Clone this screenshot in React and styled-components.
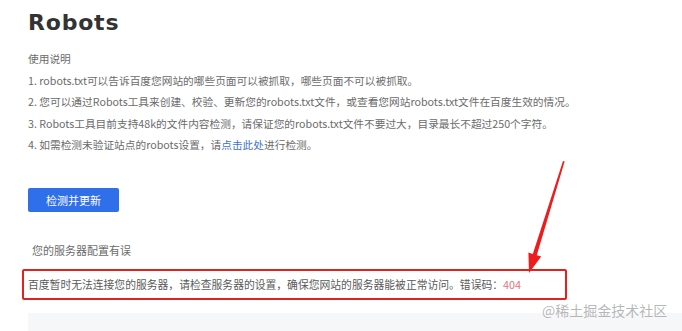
import React from "react";
import styled, { createGlobalStyle } from "styled-components";

const Global = createGlobalStyle`
  html, body { margin: 0; padding: 0; background: #fff; }
  body { font-family: "Noto Sans CJK SC", "Noto Sans", sans-serif; }
  #root { width: 682px; height: 331px; overflow: hidden; }
`;

const Page = styled.div`
  position: relative;
  width: 682px;
  height: 331px;
  overflow: hidden;
  background: #fff;
  display: flex;
  flex-direction: column;
  align-items: flex-start;
`;

const Title = styled.h1`
  margin: 8px 0 0 28px;
  font-family: "DejaVu Sans", "Noto Sans", sans-serif;
  font-weight: bold;
  font-size: 22px;
  line-height: 30px;
  letter-spacing: 0.8px;
  color: #333;
`;

const Guide = styled.div`
  margin: 10px 0 0 28px;
  font-size: 10.7px;
  line-height: 21.5px;
  color: #6b6b6b;
`;

const Line = styled.div`
  white-space: nowrap;
`;

const Link = styled.a`
  color: #4170d2;
  text-decoration: none;
`;

const Button = styled.button`
  margin: 32px 0 0 28px;
  width: 91px;
  height: 27px;
  border: 0;
  border-radius: 2px;
  background: #2f6fe9;
  color: #fff;
  font-family: "Noto Sans CJK SC", sans-serif;
  font-size: 11px;
  padding: 0;
  cursor: pointer;
`;

const Status = styled.div`
  margin: 28px 0 0 32px;
  font-size: 11px;
  line-height: 20px;
  color: #6b6b6b;
`;

const ErrorBox = styled.div`
  margin: 9px 0 0 22px;
  width: 545px;
  height: 35px;
  box-sizing: border-box;
  border: 2px solid #e3221f;
  border-radius: 2px;
  padding: 0 4px;
  display: flex;
  align-items: center;
  font-size: 10.8px;
  color: #5a5a5a;
  white-space: nowrap;
`;

const Code = styled.span`
  color: #e57381;
`;

const GrayBar = styled.div`
  margin: 13px 0 0 28px;
  align-self: stretch;
  height: 20px;
  background: #f6f7f8;
`;

const Arrow = styled.svg`
  position: absolute;
  left: 520px;
  top: 155px;
  width: 50px;
  height: 125px;
  pointer-events: none;
`;

const Watermark = styled.div`
  position: absolute;
  left: 542px;
  top: 300px;
  font-size: 14px;
  line-height: 20px;
  color: rgba(160, 160, 160, 0.75);
  white-space: nowrap;
  pointer-events: none;
`;

export default function App() {
  return (
    <>
      <Global />
      <Page>
        <Title>Robots</Title>
        <Guide>
          <Line>使用说明</Line>
          <Line>1. robots.txt可以告诉百度您网站的哪些页面可以被抓取，哪些页面不可以被抓取。</Line>
          <Line>2. 您可以通过Robots工具来创建、校验、更新您的robots.txt文件，或查看您网站robots.txt文件在百度生效的情况。</Line>
          <Line>3. Robots工具目前支持48k的文件内容检测，请保证您的robots.txt文件不要过大，目录最长不超过250个字符。</Line>
          <Line>
            4. 如需检测未验证站点的robots设置，请<Link href="#">点击此处</Link>进行检测。
          </Line>
        </Guide>
        <Button>检测并更新</Button>
        <Status>您的服务器配置有误</Status>
        <ErrorBox>
          百度暂时无法连接您的服务器，请检查服务器的设置，确保您网站的服务器能被正常访问。错误码：<Code>404</Code>
        </ErrorBox>
        <GrayBar />
        <Arrow viewBox="0 0 50 125">
          <polygon
            points="43,6 44.6,6.6 16.8,100.2 21.2,101.4 9,118 8.4,97.6 12.8,98.9"
            fill="#ee1c1c"
          />
        </Arrow>
        <Watermark>@稀土掘金技术社区</Watermark>
      </Page>
    </>
  );
}
